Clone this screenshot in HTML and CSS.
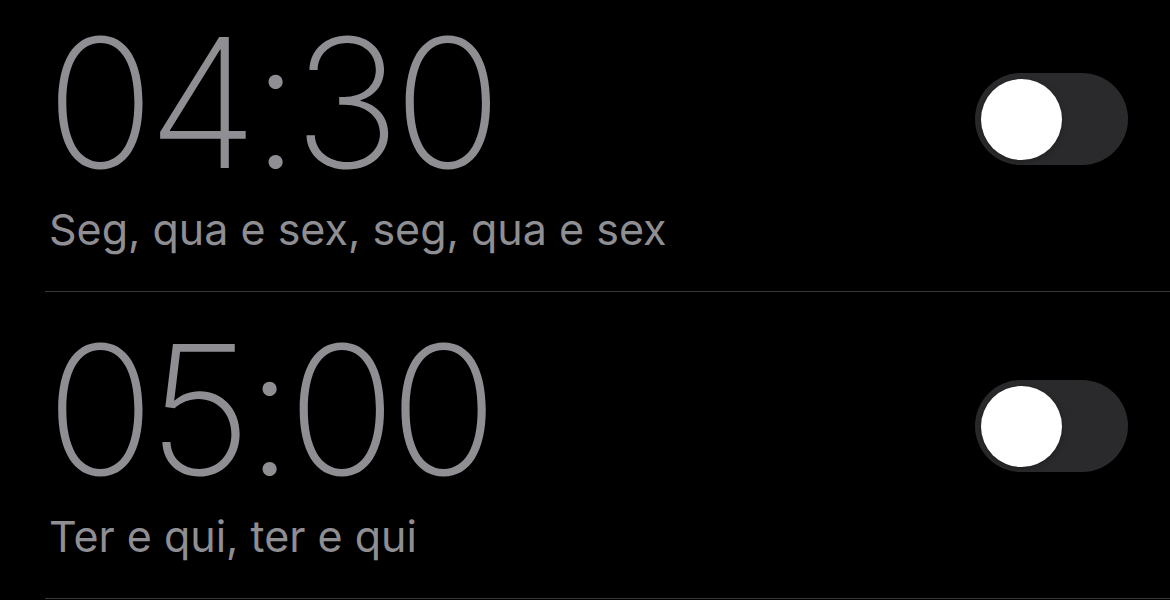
FILE: index.html
```html
<!DOCTYPE html>
<html lang="pt">
<head>
<meta charset="utf-8">
<title>Alarmes</title>
<link rel="stylesheet" href="styles.css">
</head>
<body>
<ul class="alarm-list">
  <li class="alarm">
    <div class="alarm-info">
      <div class="alarm-time">04:30</div>
      <div class="alarm-label">Seg, qua e sex, seg, qua e sex</div>
    </div>
    <div class="toggle"><span class="toggle-thumb"></span></div>
  </li>
  <li class="alarm">
    <div class="alarm-info">
      <div class="alarm-time">05:00</div>
      <div class="alarm-label">Ter e qui, ter e qui</div>
    </div>
    <div class="toggle"><span class="toggle-thumb"></span></div>
  </li>
</ul>
</body>
</html>
```
FILE: styles.css
```css
html, body {
  margin: 0;
  padding: 0;
  background: #000;
  height: 100%;
  overflow: hidden;
}

.alarm-list {
  list-style: none;
  margin: -15px 0 0 0;
  padding: 0 0 0 45px;
}

.alarm {
  height: 306px;
  border-bottom: 1px solid #38383a;
  display: flex;
  justify-content: space-between;
  align-items: flex-start;
  box-sizing: content-box;
}

.alarm-info {
  display: flex;
  flex-direction: column;
}

.alarm-time {
  font-family: Inter, "Noto Sans", sans-serif;
  font-weight: 240;
  font-size: 180px;
  line-height: 1;
  color: #8e8e93;
  padding-top: 28px;
  margin-left: 1px;
  letter-spacing: -7px;
}

.alarm-label {
  font-family: Inter, "Noto Sans", sans-serif;
  font-weight: 400;
  font-size: 43px;
  line-height: 1;
  color: #8e8e93;
  margin-top: 15px;
  margin-left: 4px;
}

.toggle {
  width: 153px;
  height: 92px;
  border-radius: 46px;
  background: #2a2a2c;
  margin-top: 88px;
  margin-right: 42px;
  padding: 6px;
  box-sizing: border-box;
  display: flex;
  align-items: center;
}

.toggle-thumb {
  width: 81px;
  height: 81px;
  border-radius: 50%;
  background: #fff;
  box-shadow: 0 2px 6px rgba(0, 0, 0, 0.25);
}
```
